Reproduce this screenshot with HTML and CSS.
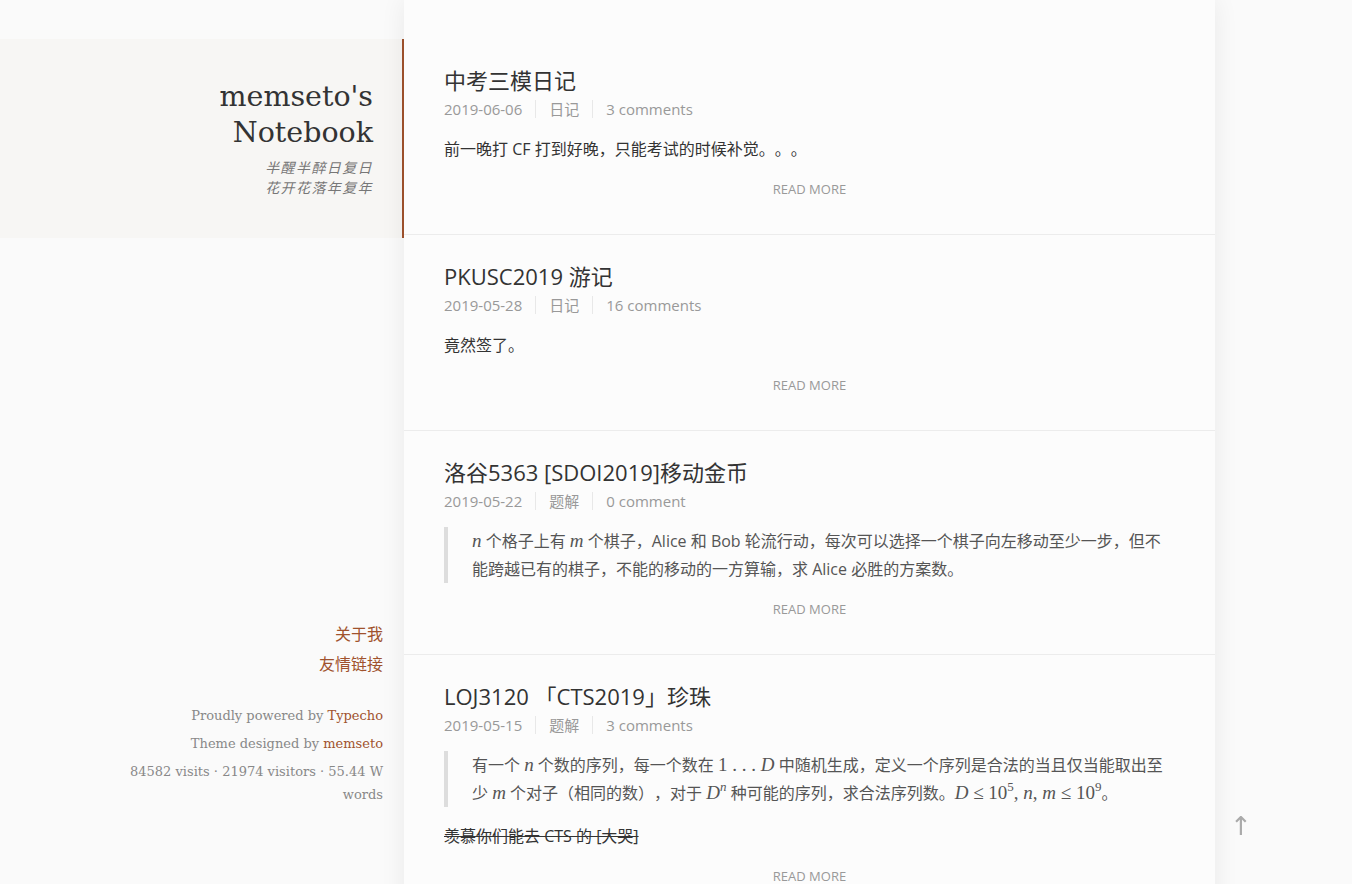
FILE: index.html
```html
<!DOCTYPE html>
<html lang="zh-CN">
<head>
<meta charset="utf-8">
<title>memseto's Notebook</title>
<link rel="stylesheet" href="styles.css">
</head>
<body>
<div class="page">
  <aside class="sidebar">
    <header class="brand">
      <h1 class="brand-title">memseto's<br>Notebook</h1>
      <p class="tagline">半醒半醉日复日<br>花开花落年复年</p>
    </header>
    <nav class="nav">
      <a class="nav-link" href="#">关于我</a>
      <a class="nav-link" href="#">友情链接</a>
    </nav>
    <footer class="info">
      <p>Proudly powered by <a class="info-link" href="#">Typecho</a></p>
      <p>Theme designed by <a class="info-link" href="#">memseto</a></p>
      <p>84582 visits · 21974 visitors · 55.44 W words</p>
    </footer>
  </aside>

  <main class="main">
    <article class="post">
      <h2 class="post-title">中考三模日记</h2>
      <div class="meta"><span class="meta-item">2019-06-06</span><span class="meta-item">日记</span><span class="meta-item">3 comments</span></div>
      <p class="excerpt">前一晚打 CF 打到好晚，只能考试的时候补觉。。。</p>
      <div class="more"><a href="#">READ MORE</a></div>
    </article>

    <article class="post">
      <h2 class="post-title">PKUSC2019 游记</h2>
      <div class="meta"><span class="meta-item">2019-05-28</span><span class="meta-item">日记</span><span class="meta-item">16 comments</span></div>
      <p class="excerpt">竟然签了。</p>
      <div class="more"><a href="#">READ MORE</a></div>
    </article>

    <article class="post">
      <h2 class="post-title">洛谷5363 [SDOI2019]移动金币</h2>
      <div class="meta"><span class="meta-item">2019-05-22</span><span class="meta-item">题解</span><span class="meta-item">0 comment</span></div>
      <blockquote class="quote"><i class="m">n</i> 个格子上有 <i class="m">m</i> 个棋子，Alice 和 Bob 轮流行动，每次可以选择一个棋子向左移动至少一步，但不能跨越已有的棋子，不能的移动的一方算输，求 Alice 必胜的方案数。</blockquote>
      <div class="more"><a href="#">READ MORE</a></div>
    </article>

    <article class="post">
      <h2 class="post-title">LOJ3120 「CTS2019」珍珠</h2>
      <div class="meta"><span class="meta-item">2019-05-15</span><span class="meta-item">题解</span><span class="meta-item">3 comments</span></div>
      <blockquote class="quote">有一个 <i class="m">n</i> 个数的序列，每一个数在 <span class="mu">1 . . . </span><i class="m">D</i> 中随机生成，定义一个序列是合法的当且仅当能取出至少 <i class="m">m</i> 个对子（相同的数），对于 <i class="m">D<sup class="sup">n</sup></i> 种可能的序列，求合法序列数。<i class="m">D</i><span class="mu"> ≤ 10<sup class="sup">5</sup>, </span><i class="m">n</i><span class="mu">, </span><i class="m">m</i><span class="mu"> ≤ 10<sup class="sup">9</sup></span>。</blockquote>
      <p class="excerpt"><del>羡慕你们能去 CTS 的 [大哭]</del></p>
      <div class="more"><a href="#">READ MORE</a></div>
    </article>
  </main>
</div>
<a class="to-top" href="#">↑</a>
</body>
</html>
```

FILE: styles.css
```css
html, body {
  margin: 0;
  padding: 0;
  overflow: hidden;
}
body {
  background: #fafafa;
  color: #333;
  font-family: "Segoe UI", "Open Sans", "Noto Sans CJK SC", sans-serif;
  text-spacing-trim: space-all;
}
a { text-decoration: none; }

.page {
  display: flex;
  align-items: flex-start;
  width: 1352px;
}

.sidebar {
  width: 404px;
  flex: none;
  display: flex;
  flex-direction: column;
}

.brand {
  margin-top: 39px;
  height: 199px;
  box-sizing: border-box;
  background: #f7f6f4;
  border-right: 2px solid #a0522d;
  text-align: right;
  padding: 40px 29px 0 0;
}
.brand-title {
  margin: 0;
  font-family: "DejaVu Serif", Georgia, serif;
  font-weight: normal;
  font-size: 28.5px;
  line-height: 36px;
  color: #333;
}
.tagline {
  margin: 6px 0 0;
  font-family: "Noto Sans CJK SC", sans-serif;
  font-style: italic;
  font-size: 14px;
  line-height: 20px;
  letter-spacing: 1.4px;
  color: #777;
}

.nav {
  margin-top: 380px;
  margin-right: 21px;
  display: flex;
  flex-direction: column;
  align-items: flex-end;
}
.nav-link {
  font-family: "Noto Sans CJK SC", sans-serif;
  font-size: 16px;
  line-height: 30px;
  color: #a0522d;
}

.info {
  margin: 26px 21px 0 auto;
  width: 258px;
  text-align: right;
  font-family: "DejaVu Serif", Georgia, serif;
  font-size: 13px;
  color: #888;
}
.info p {
  margin: 0 0 5px;
  line-height: 23px;
}
.info-link { color: #a0522d; }

.main {
  width: 811px;
  flex: none;
  min-height: 960px;
  padding-top: 39px;
  box-sizing: border-box;
  background: #fcfcfc;
  box-shadow: 0 0 24px rgba(0, 0, 0, 0.07);
  position: relative;
}

.post {
  padding: 27px 40px 35px;
  border-bottom: 1px solid #ececec;
}
.post-title {
  margin: 0;
  font-weight: normal;
  font-size: 22px;
  line-height: 28px;
  color: #333;
}
.meta {
  margin-top: 4px;
  display: flex;
  font-size: 15px;
  line-height: 22px;
  color: #999;
}
.meta-item {
  padding: 0 13px;
  border-left: 1px solid #e8e8e8;
  line-height: 18px;
  margin: 2px 0;
}
.meta-item:first-child {
  padding-left: 0;
  border-left: none;
}
.excerpt {
  margin: 15px 0 0;
  font-size: 16px;
  line-height: 28px;
  color: #333;
}
.quote {
  margin: 15px 0 0;
  padding-left: 24px;
  border-left: 4px solid #ddd;
  font-size: 16px;
  line-height: 28px;
  color: #555;
}
.m {
  font-family: "Liberation Serif", "Times New Roman", serif;
  font-style: italic;
  font-size: 19px;
  line-height: 1;
  color: #555;
}
.mu {
  font-family: "Liberation Serif", "Times New Roman", serif;
  font-size: 19px;
  line-height: 1;
}
.sup {
  font-size: 13px;
  line-height: 0;
  vertical-align: 8px;
  font-style: italic;
}
.mu .sup { font-style: normal; }

.more {
  margin-top: 16px;
  text-align: center;
  font-size: 13px;
  line-height: 20px;
}
.more a { color: #999; }

.to-top {
  position: fixed;
  left: 1230px;
  top: 811px;
  font-family: "DejaVu Sans", sans-serif;
  font-size: 26px;
  color: #aaa;
}
```
